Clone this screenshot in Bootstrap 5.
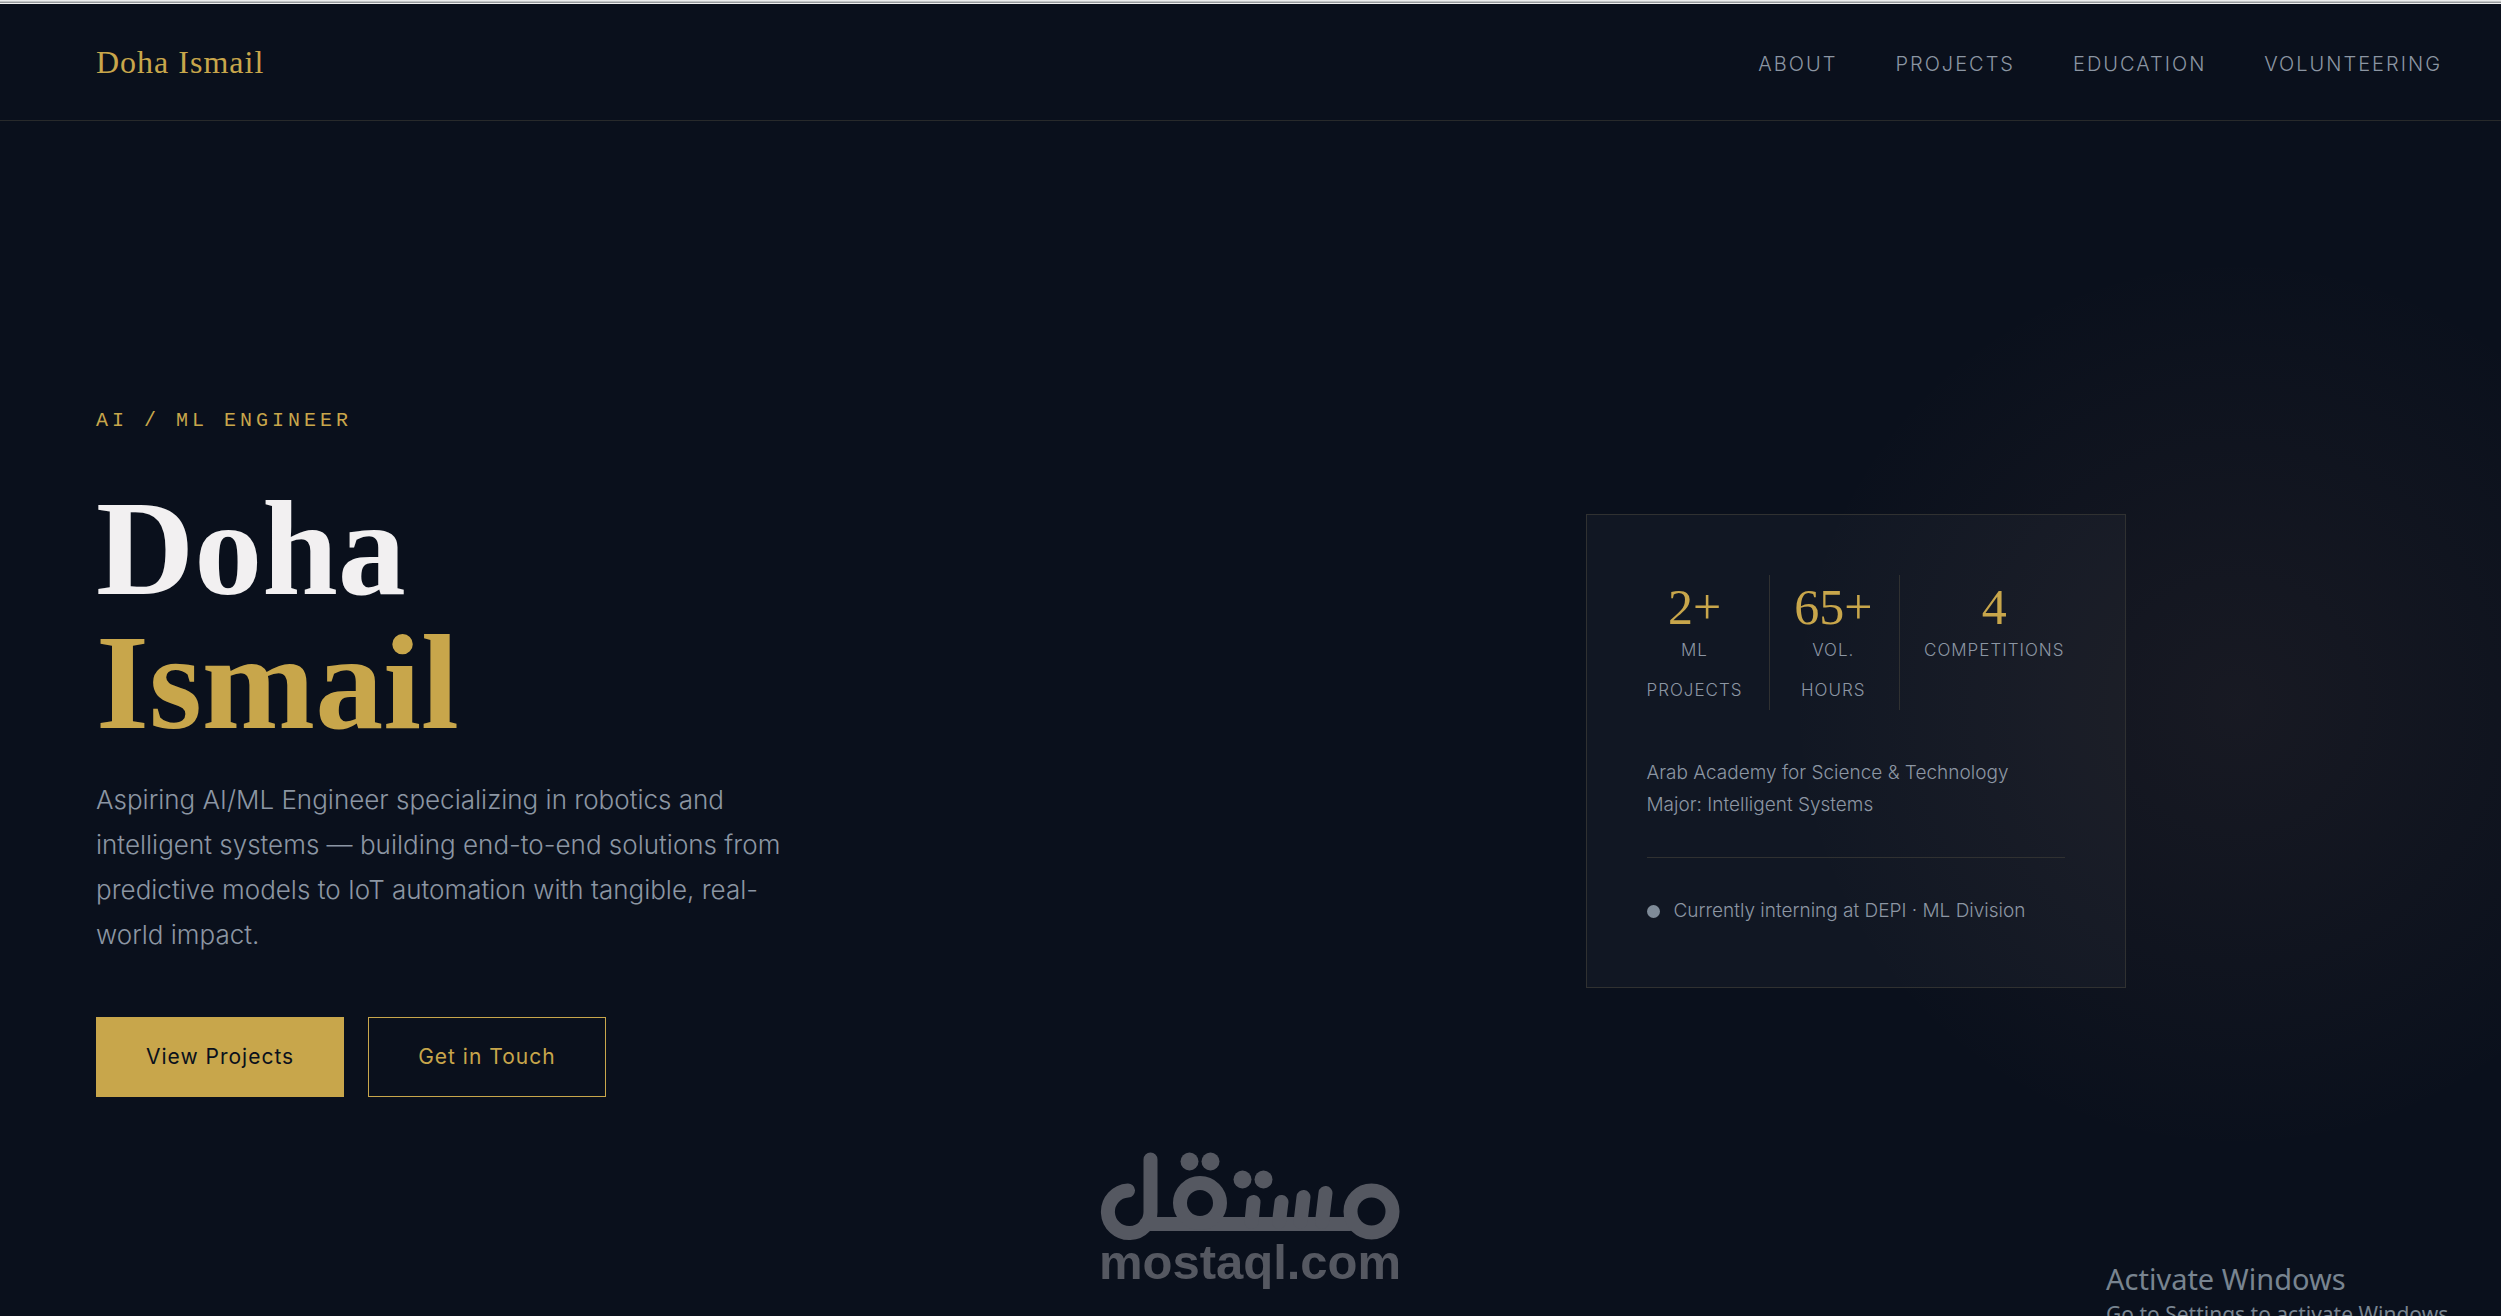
<!DOCTYPE html>
<html lang="en">
<head>
<meta charset="utf-8">
<meta name="viewport" content="width=device-width, initial-scale=1">
<title>Doha Ismail</title>
<link href="https://cdn.jsdelivr.net/npm/bootstrap@5.3.0/dist/css/bootstrap.min.css" rel="stylesheet">
<style>
:root{--gold:#c8a64b;--ink:#0a101c;--muted:#8c96a3;--rule:#303131}
body{background:var(--ink);color:var(--muted);font-family:Inter,"Liberation Sans",sans-serif;font-weight:300;overflow:hidden}
.page{min-height:100vh;overflow:hidden}
.edge-strip{height:4px;background:linear-gradient(#eceded 0 1px,#c4c6c7 1px 2px,#96999c 2px 3px,#f2f2f2 3px 4px)}
.gutters{padding-left:96px;padding-right:59px}
.site-nav{height:117px;border-bottom:1px solid #282a2b}
.site-nav .navbar-brand{font-family:"Liberation Serif",serif;font-size:32px;letter-spacing:1px;color:var(--gold)}
.site-nav .navbar-nav{gap:58px;padding-top:4px}
.site-nav .nav-link{font-size:20px;letter-spacing:2px;color:var(--muted)}
.hero{padding-top:284px;padding-bottom:211px}
.glow{position:absolute;left:100%;top:583px;width:900px;height:900px;margin-left:-264px;transform:translate(-50%,-50%);border-radius:50%;background:radial-gradient(circle closest-side,rgba(205,150,125,.07),rgba(205,150,125,.045) 40%,rgba(205,150,125,0));pointer-events:none}
.eyebrow{font-family:"Liberation Mono",monospace;font-size:20px;line-height:32px;letter-spacing:4px;font-weight:400;color:var(--gold);margin-bottom:44px}
.hero-title{font-family:"Liberation Serif",serif;font-size:136px;line-height:134px;font-weight:700;color:#f2f0f1;margin-bottom:28px}
.hero-title span{color:var(--gold)}
.intro{font-size:26px;line-height:45px;max-width:700px;margin-bottom:60px}
.btn-hero{--bs-btn-border-radius:0;--bs-btn-padding-x:49px;height:80px;font-size:21px;letter-spacing:1px;--bs-btn-border-color:var(--gold);--bs-btn-color:var(--gold);--bs-btn-hover-color:var(--ink);--bs-btn-hover-bg:var(--gold)}
.btn-solid{--bs-btn-bg:var(--gold);--bs-btn-color:var(--ink)}
.profile{width:540px;padding:60px;border:1px solid var(--rule);background:rgba(255,255,255,.03)}
.stats{margin-bottom:47px}
.stat{padding:0 24px;border-left:1px solid var(--rule)}
.stat:first-child{padding-left:0;border-left:0}
.stat:last-child{padding-right:0}
.stat-num{font-family:"Liberation Serif",serif;font-size:50px;line-height:45px;padding-top:10px;color:var(--gold)}
.stat-cap{font-size:17px;line-height:40px;letter-spacing:1px}
.school{font-size:19px;line-height:32px;margin-bottom:36px}
.status{font-size:19px;line-height:32px;border-top:1px solid var(--rule);padding-top:37px;gap:14px}
.dot{width:13px;height:13px;border-radius:50%;background:#7f8b98}
.brandmark{position:absolute;left:50%;bottom:22px;width:300px;margin-left:-151px}
.os-note{position:absolute;left:100%;top:1259px;margin-left:-395px;font-family:"Noto Sans",sans-serif;font-weight:400;white-space:nowrap;color:#788490}
.os-note .big{font-size:29px;line-height:40px}
.os-note .sub{font-size:21px;line-height:30px}
</style>
</head>
<body>
<div class="page position-relative">
  <div class="edge-strip"></div>
  <nav class="navbar navbar-expand site-nav gutters py-0">
    <a class="navbar-brand m-0" href="#">Doha Ismail</a>
    <div class="navbar-nav ms-auto">
      <a class="nav-link p-0" href="#about">ABOUT</a>
      <a class="nav-link p-0" href="#projects">PROJECTS</a>
      <a class="nav-link p-0" href="#education">EDUCATION</a>
      <a class="nav-link p-0" href="#volunteering">VOLUNTEERING</a>
    </div>
  </nav>
  <main class="hero gutters position-relative">
    <div class="glow"></div>
    <div class="row g-0 align-items-center position-relative">
      <section class="col-6">
        <p class="eyebrow">AI / ML ENGINEER</p>
        <h1 class="hero-title">Doha<br><span>Ismail</span></h1>
        <p class="intro">Aspiring AI/ML Engineer specializing in robotics and intelligent systems — building end-to-end solutions from predictive models to IoT automation with tangible, real-world impact.</p>
        <div class="d-flex gap-4">
          <button type="button" class="btn btn-hero btn-solid">View Projects</button>
          <button type="button" class="btn btn-hero">Get in Touch</button>
        </div>
      </section>
      <section class="col-6 d-flex justify-content-center">
        <div class="profile">
          <div class="stats d-flex justify-content-between text-center">
            <div class="stat"><div class="stat-num">2+</div><div class="stat-cap">ML<br>PROJECTS</div></div>
            <div class="stat"><div class="stat-num">65+</div><div class="stat-cap">VOL.<br>HOURS</div></div>
            <div class="stat"><div class="stat-num">4</div><div class="stat-cap">COMPETITIONS</div></div>
          </div>
          <p class="school">Arab Academy for Science &amp; Technology<br>Major: Intelligent Systems</p>
          <div class="status d-flex align-items-center"><span class="dot"></span><span>Currently interning at DEPI · ML Division</span></div>
        </div>
      </section>
    </div>
  </main>
  <svg class="brandmark" viewBox="0 0 300 142" fill="none" stroke="#555861" stroke-width="14" stroke-linecap="round" role="img" aria-label="mostaql.com">
    <path d="M28 38.500A21.300 21.300 0 1 0 50.500 59V7.500M46 72H250"/>
    <circle cx="100" cy="51" r="20"/><circle cx="271.500" cy="59.500" r="21"/>
    <path d="M153.500 50L151.500 70M181.500 50L179 70M203.500 45L200.500 70M225.500 41L222 70"/>
    <g fill="#555861" stroke="none"><circle cx="89.500" cy="9.500" r="9"/><circle cx="110.500" cy="9.500" r="9"/><circle cx="142.500" cy="27.500" r="9"/><circle cx="163.500" cy="27.500" r="9"/>
    <text x="150" y="127" text-anchor="middle" font-family="Liberation Sans, sans-serif" font-weight="700" font-size="49">mostaql.com</text></g>
  </svg>
  <div class="os-note"><div class="big">Activate Windows</div><div class="sub">Go to Settings to activate Windows.</div></div>
</div>
<script src="https://cdn.jsdelivr.net/npm/bootstrap@5.3.0/dist/js/bootstrap.bundle.min.js"></script>
</body>
</html>
